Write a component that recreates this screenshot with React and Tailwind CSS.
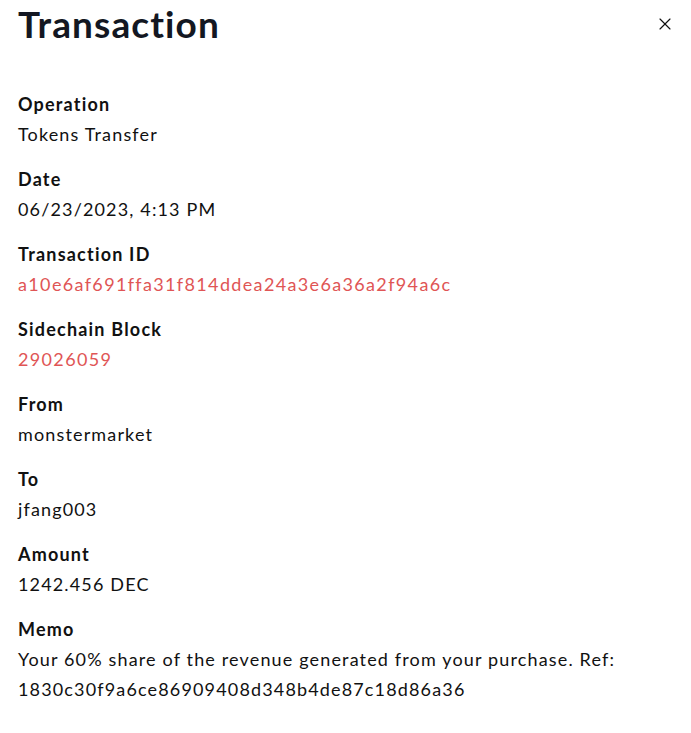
import React from 'react';
import { X } from 'lucide-react';

const rows = [
	{ label: 'Operation', value: 'Tokens Transfer' },
	{ label: 'Date', value: '06/23/2023, 4:13 PM' },
	{ label: 'Transaction ID', value: 'a10e6af691ffa31f814ddea24a3e6a36a2f94a6c', link: true },
	{ label: 'Sidechain Block', value: '29026059', link: true },
	{ label: 'From', value: 'monstermarket' },
	{ label: 'To', value: 'jfang003' },
	{ label: 'Amount', value: '1242.456 DEC' },
	{
		label: 'Memo',
		value: 'Your 60% share of the revenue generated from your purchase. Ref: 1830c30f9a6ce86909408d348b4de87c18d86a36',
	},
];

const App = () => {
	return (
		<div
			className="min-h-screen bg-white px-[18px] text-[#111111]"
			style={{ fontFamily: 'Lato, "Open Sans", sans-serif' }}
		>
			{/* header */}
			<div className="flex items-start justify-between">
				<h1 className="text-[37px] font-bold leading-[48px] tracking-[1.1px] text-[#131722]">Transaction</h1>
				<button className="mr-[-2px] mt-[14px] text-[#111111]">
					<X size={20} strokeWidth={1.4} />
				</button>
			</div>

			<div className="mt-[41px] flex flex-col gap-[15px]">
				{rows.map((row) => (
					<div key={row.label}>
						<div className="text-[18px] font-bold leading-[30px] tracking-[1.2px]">{row.label}</div>
						<div
							className={
								row.link
									? 'text-[18px] leading-[30px] tracking-[1.35px] text-[#e05555]'
									: 'text-[18px] leading-[30px] tracking-[1.15px] text-[#111111]'
							}
						>
							{row.value}
						</div>
					</div>
				))}
			</div>
		</div>
	);
};

export default App;
